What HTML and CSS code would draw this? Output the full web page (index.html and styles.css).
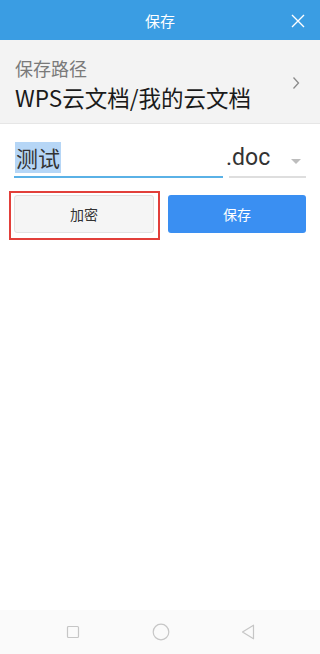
FILE: index.html
```html
<!DOCTYPE html>
<html lang="zh">
<head>
<meta charset="utf-8">
<title>保存</title>
<link rel="stylesheet" href="styles.css">
</head>
<body>
<div class="screen">
  <header class="topbar">
    <div class="title">保存</div>
    <svg class="close" width="14" height="14" viewBox="0 0 14 14"><path d="M1 1L13 13M13 1L1 13" stroke="#fff" stroke-width="1.4" fill="none"/></svg>
  </header>
  <section class="path">
    <div class="path-text">
      <div class="path-label">保存路径</div>
      <div class="path-value">WPS云文档/我的云文档</div>
    </div>
    <svg class="chev" width="8" height="14" viewBox="0 0 8 14"><path d="M1.5 1.5L6.5 7L1.5 12.5" stroke="#8a8a8a" stroke-width="1.3" fill="none"/></svg>
  </section>
  <main class="content">
    <div class="fields">
      <div class="field name"><span class="sel">测试</span></div>
      <div class="field ext"><span class="ext-text">.doc</span><span class="tri"></span></div>
    </div>
    <div class="buttons">
      <button class="btn secondary">加密</button>
      <button class="btn primary">保存</button>
    </div>
  </main>
  <nav class="navbar">
    <svg width="14" height="14" viewBox="0 0 14 14"><rect x="1.5" y="1.5" width="11" height="11" rx="1" stroke="#c6c6c6" stroke-width="1.2" fill="none"/></svg>
    <svg width="18" height="18" viewBox="0 0 18 18"><circle cx="9" cy="9" r="7.8" stroke="#c6c6c6" stroke-width="1.2" fill="none"/></svg>
    <svg width="14" height="16" viewBox="0 0 14 16"><path d="M12.5 1.2L1.5 8L12.5 14.8Z" stroke="#c6c6c6" stroke-width="1.2" fill="none" stroke-linejoin="round"/></svg>
  </nav>
</div>
</body>
</html>
```

FILE: styles.css
```css
* { box-sizing: border-box; }
html, body { margin: 0; padding: 0; }
body {
  font-family: "Noto Sans CJK SC", "Noto Sans", "Liberation Sans", sans-serif;
  background: #fff;
}
.screen {
  width: 320px;
  height: 654px;
  display: flex;
  flex-direction: column;
}
.topbar {
  height: 40px;
  background: #3a9de3;
  display: flex;
  align-items: center;
  justify-content: center;
  position: relative;
}
.title {
  color: #fff;
  font-size: 15px;
}
.close {
  position: absolute;
  right: 15px;
  top: 14px;
}
.path {
  height: 84px;
  background: #f3f3f3;
  border-bottom: 1px solid #e6e6e6;
  display: flex;
  align-items: center;
  padding: 0 20px 0 15px;
}
.path-text { flex: 1; padding-top: 4px; }
.path-label {
  font-size: 18px;
  color: #7a7a7a;
  line-height: 26px;
}
.path-value {
  font-size: 22.5px;
  color: #1a1a1a;
  line-height: 32px;
}
.chev { margin-top: 2px; }
.content {
  flex: 1;
  padding: 0 14px;
}
.fields {
  display: flex;
  gap: 6px;
  margin-top: 14px;
}
.field {
  height: 40px;
  display: flex;
  align-items: center;
}
.name {
  width: 209px;
  border-bottom: 2px solid #5ab1e6;
}
.sel {
  background: #b6d6f6;
  color: #333;
  font-size: 22px;
  line-height: 31px;
  padding: 0 1px;
  margin-left: 1px;
}
.ext {
  flex: 1;
  border-bottom: 2px solid #dedede;
  justify-content: space-between;
}
.ext-text {
  font-family: "Roboto", "Liberation Sans", sans-serif;
  font-size: 23px;
  color: #333;
  margin-left: -3px;
}
.tri {
  width: 0;
  height: 0;
  border-left: 5px solid transparent;
  border-right: 5px solid transparent;
  border-top: 5px solid #bdbdbd;
  margin-right: 5px;
  margin-top: 8px;
}
.buttons {
  display: flex;
  gap: 14px;
  margin-top: 17px;
}
.btn {
  flex: 1;
  height: 38px;
  border-radius: 3px;
  font-family: inherit;
  font-size: 14px;
  padding: 0;
}
.secondary {
  position: relative;
  background: #f5f5f5;
  border: 1px solid #e2e2e2;
  color: #333;
}
.secondary::after {
  content: "";
  position: absolute;
  left: -6px;
  right: -7px;
  top: -5px;
  bottom: -8px;
  border: 2px solid #e23f3a;
}
.primary {
  background: #3a8ff2;
  border: none;
  color: #fff;
}
.navbar {
  height: 44px;
  background: #fafafa;
  display: flex;
  align-items: center;
  justify-content: space-between;
  padding: 0 65px 0 66px;
}
```
